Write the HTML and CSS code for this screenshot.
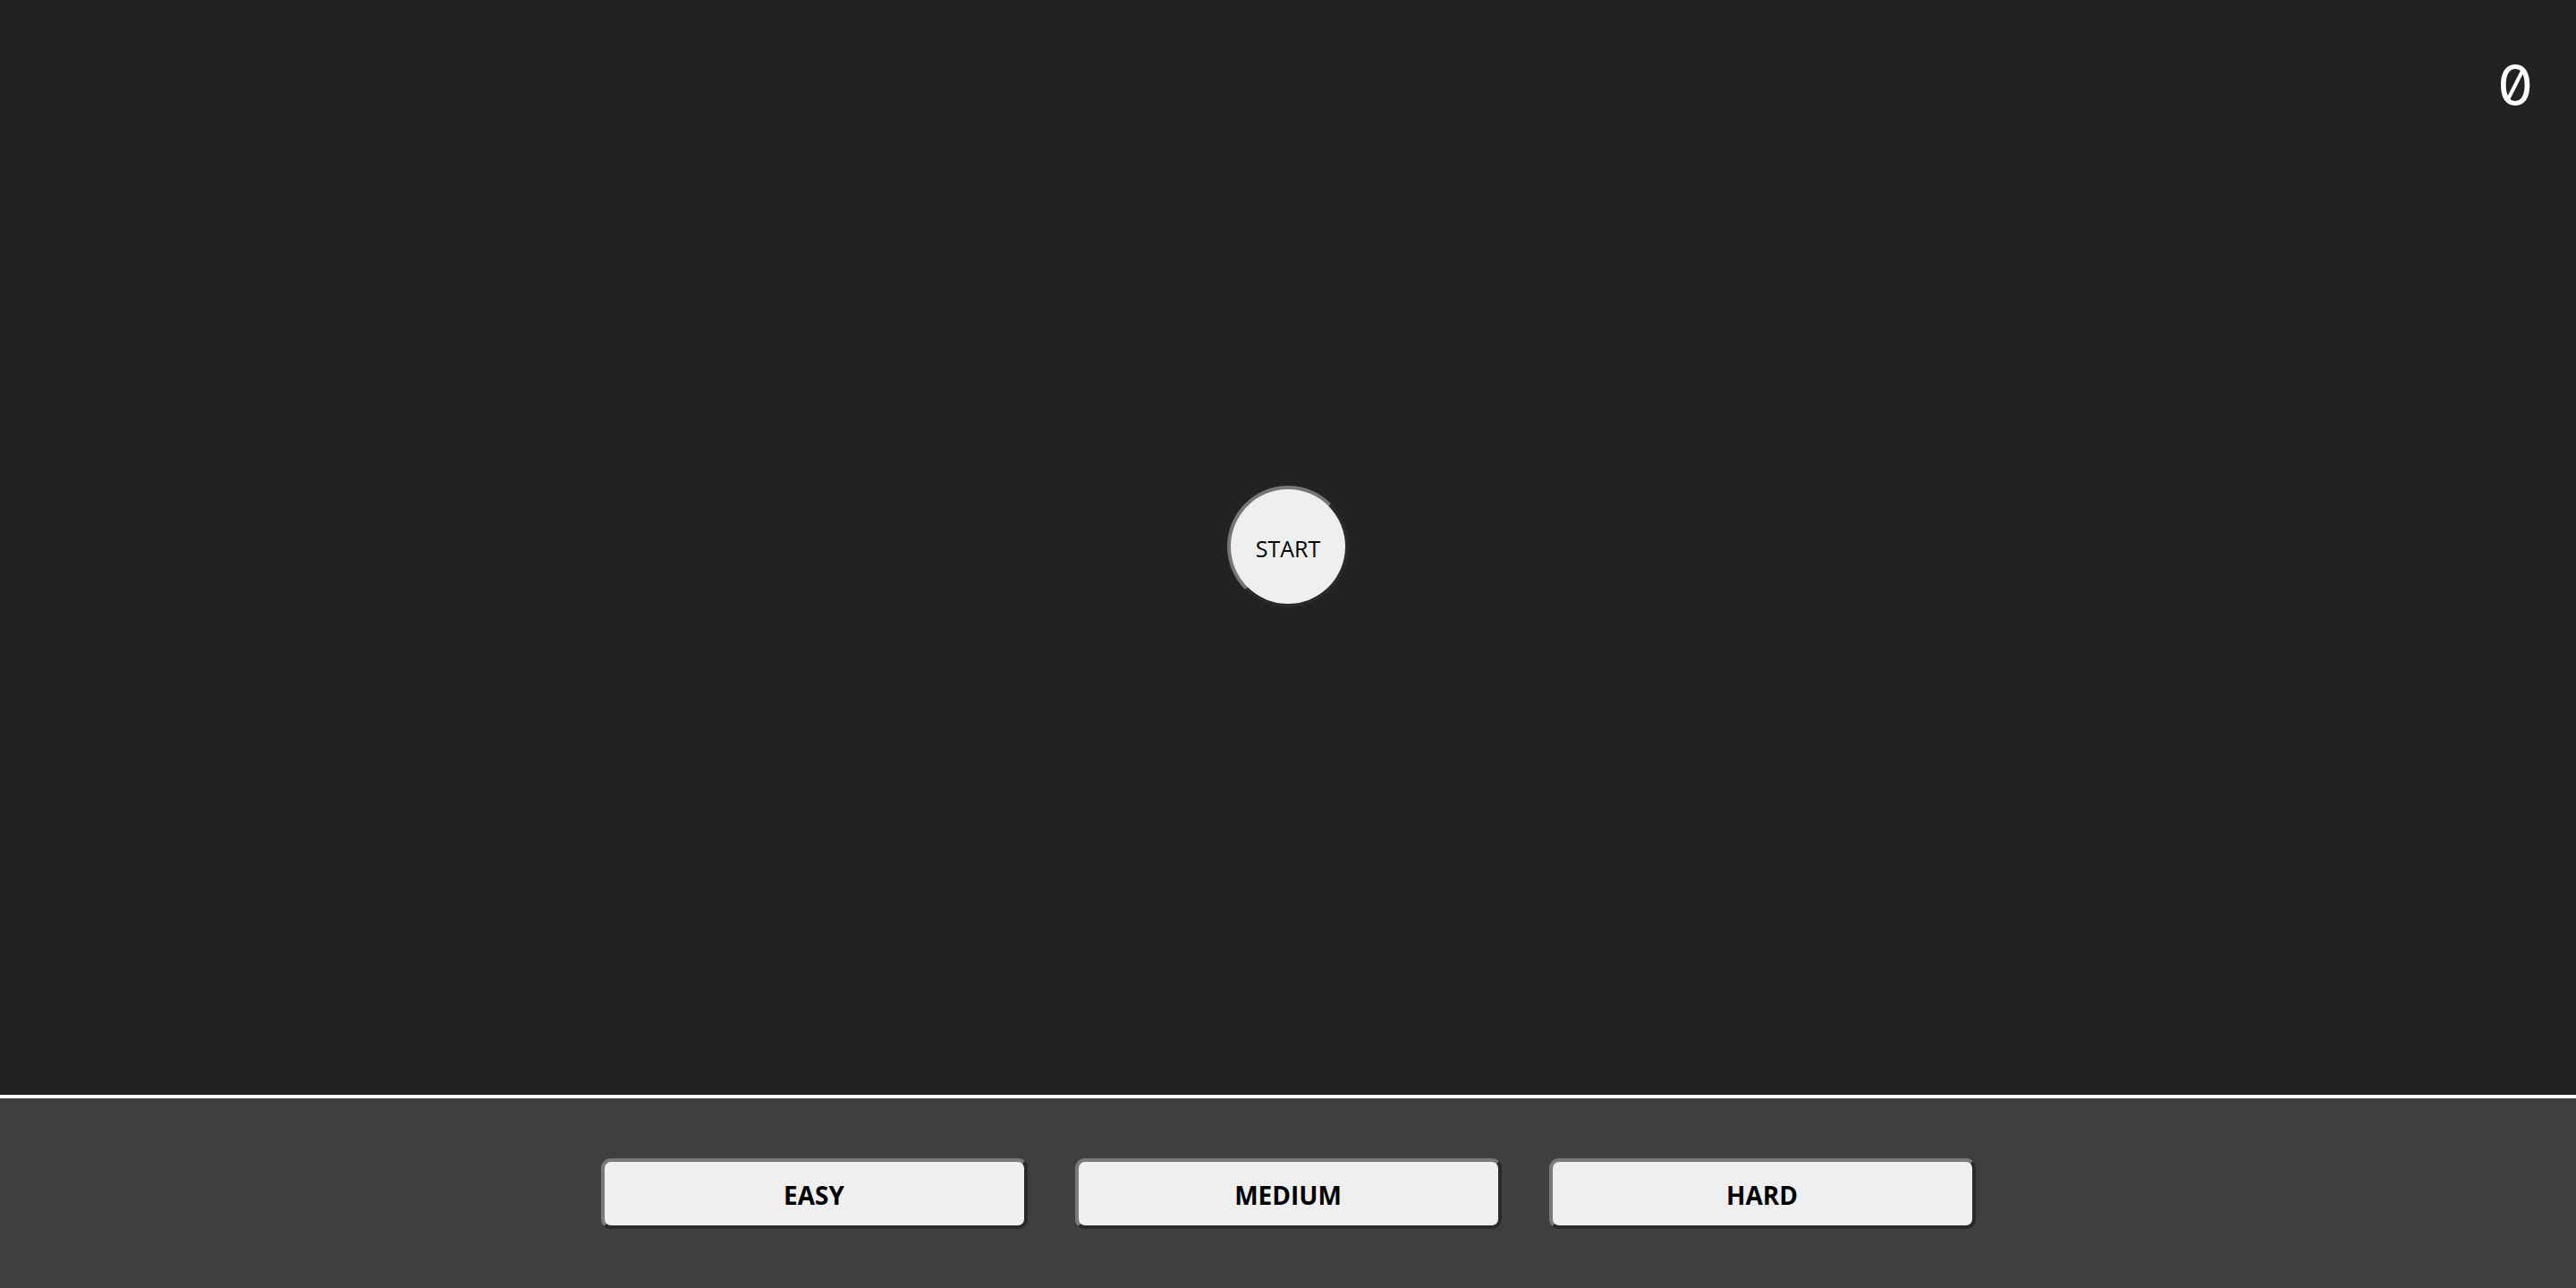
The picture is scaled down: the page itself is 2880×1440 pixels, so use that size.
FILE: index.html
```html
<!DOCTYPE html>
<html>
<head>
<meta charset="utf-8">
<link rel="stylesheet" href="styles.css">
</head>
<body>
<main class="game">
  <div class="score">0</div>
  <button class="start">START</button>
</main>
<footer class="panel">
  <button class="level">EASY</button>
  <button class="level">MEDIUM</button>
  <button class="level">HARD</button>
</footer>
</body>
</html>
```
FILE: styles.css
```css
html, body {
  margin: 0;
  padding: 0;
  height: 100%;
  background: #222222;
  overflow: hidden;
}
body {
  display: flex;
  flex-direction: column;
  font-family: "Open Sans", "Noto Sans", sans-serif;
}
.game {
  position: relative;
  height: 1224px;
  background: #222222;
  display: flex;
  align-items: center;
  justify-content: center;
}
.score {
  position: absolute;
  top: 58px;
  right: 48px;
  font-family: "Inter", "DejaVu Sans Mono", monospace;
  font-variant-numeric: slashed-zero;
  font-feature-settings: "zero" 1;
  font-size: 63px;
  line-height: 1.2;
  color: #ffffff;
}
.start {
  width: 136px;
  height: 136px;
  border-radius: 50%;
  box-sizing: border-box;
  border: 4px solid;
  border-color: #767676 #2a2a2a #2a2a2a #767676;
  background: #efefef;
  color: #000;
  font-family: "Open Sans", sans-serif;
  font-size: 25px;
  padding: 5px 0 0;
  margin-top: -3px;
}
.panel {
  flex: 1;
  border-top: 4px solid #ffffff;
  background: #3f3f41;
  display: flex;
  align-items: center;
  justify-content: center;
  gap: 53px;
}
.level {
  width: 477px;
  height: 79px;
  box-sizing: border-box;
  border: 4px solid;
  border-color: #7a7a7a #2a2a2a #2a2a2a #7a7a7a;
  border-radius: 11px;
  background: #efefef;
  color: #000;
  font-family: "Open Sans", sans-serif;
  font-weight: 700;
  font-size: 28px;
  padding: 3px 0 0;
}
```
